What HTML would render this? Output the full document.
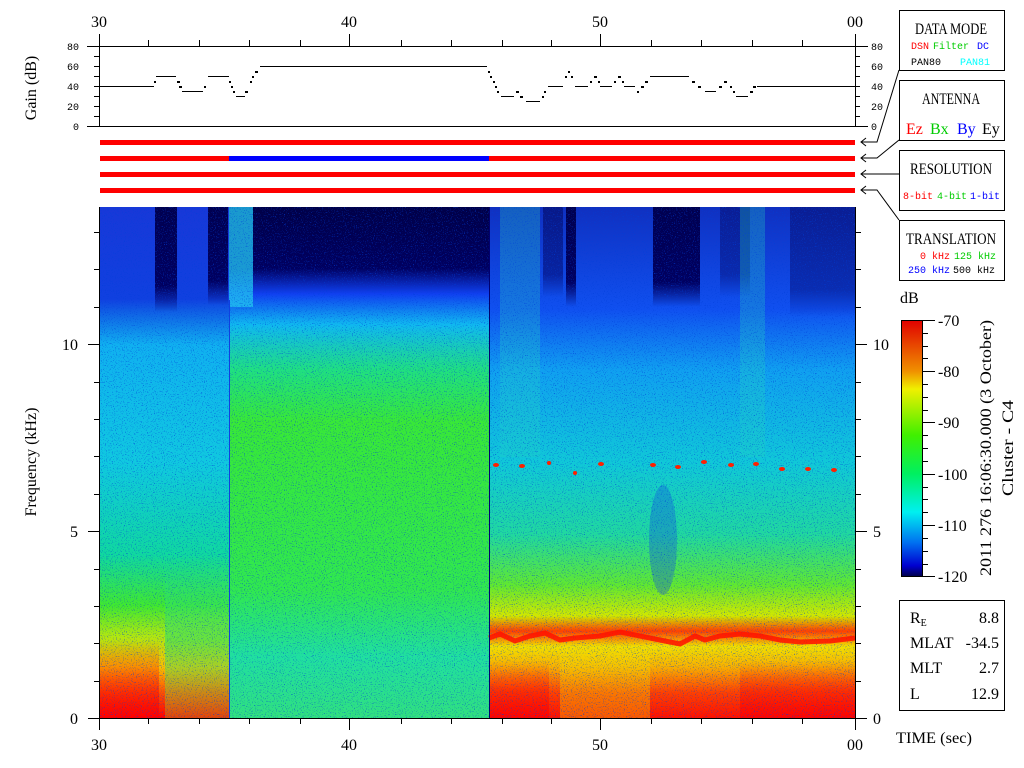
<!DOCTYPE html>
<html><head><meta charset="utf-8"><style>
html,body{margin:0;padding:0;background:#fff;width:1024px;height:768px;overflow:hidden}
svg{display:block}
.s{font-family:"Liberation Serif",serif;font-size:16px;fill:#000}
.m{font-family:"Liberation Mono",monospace;font-size:10px}
</style></head><body>
<svg width="1024" height="768" viewBox="0 0 1024 768" xmlns="http://www.w3.org/2000/svg">
<defs>
<linearGradient id="gL" gradientUnits="userSpaceOnUse" x1="0" y1="207" x2="0" y2="718">
<stop offset="0" stop-color="#1838d8"/><stop offset="0.18" stop-color="#1040e0"/><stop offset="0.27" stop-color="#10b0f0"/><stop offset="0.5" stop-color="#10c8e0"/><stop offset="0.68" stop-color="#10d8a0"/><stop offset="0.78" stop-color="#40e830"/><stop offset="0.84" stop-color="#b0e810"/><stop offset="0.9" stop-color="#f8c000"/><stop offset="0.95" stop-color="#ff5000"/><stop offset="1" stop-color="#ff0000"/></linearGradient>
<linearGradient id="gM" gradientUnits="userSpaceOnUse" x1="0" y1="207" x2="0" y2="718">
<stop offset="0" stop-color="#000048"/><stop offset="0.12" stop-color="#000060"/><stop offset="0.17" stop-color="#1040f0"/><stop offset="0.23" stop-color="#10b8f0"/><stop offset="0.32" stop-color="#20e080"/><stop offset="0.42" stop-color="#38e838"/><stop offset="0.75" stop-color="#30e850"/><stop offset="0.88" stop-color="#20e0a0"/><stop offset="1" stop-color="#30e080"/></linearGradient>
<linearGradient id="gR" gradientUnits="userSpaceOnUse" x1="0" y1="207" x2="0" y2="718">
<stop offset="0" stop-color="#1030c0"/><stop offset="0.2" stop-color="#1050f0"/><stop offset="0.32" stop-color="#10a0f0"/><stop offset="0.5" stop-color="#10c8d8"/><stop offset="0.64" stop-color="#20d8a0"/><stop offset="0.74" stop-color="#60e830"/><stop offset="0.8" stop-color="#d0e800"/><stop offset="0.83" stop-color="#ff4000"/><stop offset="0.86" stop-color="#f0e000"/><stop offset="0.9" stop-color="#f8b000"/><stop offset="0.95" stop-color="#ff4000"/><stop offset="1" stop-color="#ff1000"/></linearGradient>
<linearGradient id="nv" x1="0" y1="0" x2="0" y2="1"><stop offset="0" stop-color="#000050"/><stop offset="0.75" stop-color="#000060"/><stop offset="1" stop-color="#000060" stop-opacity="0"/></linearGradient>
<linearGradient id="cb" x1="0" y1="0" x2="0" y2="1">
<stop offset="0" stop-color="#e00000"/><stop offset="0.2" stop-color="#f09000"/><stop offset="0.27" stop-color="#f0f000"/><stop offset="0.45" stop-color="#40f000"/><stop offset="0.6" stop-color="#00f060"/><stop offset="0.75" stop-color="#00f0f0"/><stop offset="0.87" stop-color="#0070f0"/><stop offset="0.96" stop-color="#0000d0"/><stop offset="1" stop-color="#000050"/></linearGradient>
<linearGradient id="rd" x1="0" y1="0" x2="0" y2="1"><stop offset="0" stop-color="#ff1000" stop-opacity="0"/><stop offset="0.6" stop-color="#ff1000" stop-opacity="0.5"/><stop offset="1" stop-color="#ff0000" stop-opacity="0.8"/></linearGradient>
<linearGradient id="gn" x1="0" y1="0" x2="0" y2="1"><stop offset="0" stop-color="#20d8b0" stop-opacity="0"/><stop offset="0.5" stop-color="#30e060" stop-opacity="0.6"/><stop offset="1" stop-color="#a0e020" stop-opacity="0.3"/></linearGradient>
<filter id="nz" x="0" y="0" width="100%" height="100%"><feTurbulence type="fractalNoise" baseFrequency="0.9" numOctaves="1" seed="3"/><feColorMatrix type="matrix" values="0 0 0 0 0  0 0 0 0 0.05  0 0 0 0 0.7  0 0 0 9 -5.4"/></filter>
</defs>

<g class="s" font-size="17" text-anchor="middle">
<text x="99" y="27">30</text><text x="349" y="27">40</text><text x="600" y="27">50</text><text x="855" y="27">00</text>
</g>
<g stroke="#000" fill="none" stroke-width="1">
<path d="M99.5 34V126.5M87 46.5H99M87 126.5H99M94 56.5H99M94 66.5H99M94 76.5H99M94 86.5H99M94 96.5H99M94 106.5H99M94 116.5H99"/>
<path d="M855.5 34V126.5M855 46.5H868M855 126.5H868M855 56.5H860M855 66.5H860M855 76.5H860M855 86.5H860M855 96.5H860M855 106.5H860M855 116.5H860"/>
<path d="M99 126.5H856M99 46.5H856"/>
<path d="M148.5 40V46M199.5 40V46M249.5 40V46M300.5 40V46M349.5 34V46M401.5 40V46M451.5 40V46M502.5 40V46M551.5 40V46M600.5 34V46M651.5 40V46M701.5 40V46M752.5 40V46M802.5 40V46"/>
<path d="M100 86.5H154M156 76.5H176M182 91.5H203M208 76.5H229M236 96.5H245M260 66.5H487M501 96.5H514M526 101.5H540M548 86.5H563M575 86.5H588M600 86.5H612M624 86.5H635M650 76.5H689M705 91.5H716M736 96.5H748M757 86.5H855"/>
</g>
<g fill="#000">
<rect x="154" y="81" width="2" height="2"/><rect x="177" y="81" width="3" height="2"/><rect x="179" y="86" width="3" height="2"/><rect x="204" y="86" width="2" height="2"/><rect x="229" y="81" width="2" height="2"/><rect x="231" y="86" width="2" height="2"/><rect x="233" y="91" width="2" height="2"/><rect x="245" y="91" width="3" height="2"/><rect x="250" y="81" width="2" height="2"/><rect x="252" y="76" width="2" height="2"/><rect x="255" y="71" width="3" height="2"/>
<rect x="488" y="71" width="2" height="2"/><rect x="490" y="76" width="2" height="2"/><rect x="493" y="81" width="2" height="2"/><rect x="495" y="86" width="2" height="2"/><rect x="497" y="91" width="2" height="2"/><rect x="516" y="91" width="3" height="2"/><rect x="520" y="96" width="3" height="2"/><rect x="542" y="96" width="2" height="2"/><rect x="544" y="91" width="2" height="2"/><rect x="565" y="76" width="2" height="2"/><rect x="568" y="71" width="2" height="2"/><rect x="571" y="76" width="2" height="2"/><rect x="590" y="81" width="2" height="2"/><rect x="594" y="76" width="3" height="2"/><rect x="598" y="81" width="2" height="2"/><rect x="614" y="81" width="2" height="2"/><rect x="618" y="76" width="3" height="2"/><rect x="622" y="81" width="2" height="2"/><rect x="637" y="91" width="2" height="2"/><rect x="641" y="86" width="3" height="2"/><rect x="645" y="81" width="3" height="2"/><rect x="692" y="81" width="3" height="2"/><rect x="698" y="86" width="3" height="2"/><rect x="719" y="86" width="3" height="2"/><rect x="724" y="81" width="3" height="2"/><rect x="730" y="86" width="2" height="2"/><rect x="733" y="91" width="2" height="2"/><rect x="750" y="91" width="3" height="2"/><rect x="753" y="86" width="3" height="2"/>
</g>
<g class="m" fill="#000" font-size="11">
<text x="67" y="50">80</text><text x="67" y="70">60</text><text x="67" y="90">40</text><text x="67" y="110">20</text><text x="73" y="130">0</text>
<text x="871" y="50">80</text><text x="871" y="70">60</text><text x="871" y="90">40</text><text x="871" y="110">20</text><text x="871" y="130">0</text>
</g>
<text class="s" transform="translate(36,88) rotate(-90)" text-anchor="middle" font-size="16">Gain (dB)</text>

<rect x="100" y="140" width="755" height="5" fill="#f00"/>
<rect x="100" y="156" width="755" height="5" fill="#f00"/>
<rect x="229" y="156" width="260" height="5" fill="#00f"/>
<rect x="100" y="172" width="755" height="5" fill="#f00"/>
<rect x="100" y="188" width="755" height="5" fill="#f00"/>

<g stroke="#000" fill="none">
<path d="M866 138L861 142L866 146M861 142H877L899 70"/>
<path d="M866 154L861 158L866 162M861 158H877L899 140"/>
<path d="M866 170L861 174L866 178M861 174H899"/>
<path d="M866 186L861 190L866 194M861 190H877L899 220"/>
</g>
<g fill="#fff" stroke="#000">
<rect x="899.5" y="10.5" width="105" height="60"/>
<rect x="899.5" y="80.5" width="105" height="60"/>
<rect x="899.5" y="150.5" width="105" height="60"/>
<rect x="899.5" y="220.5" width="105" height="60"/>
<rect x="899.5" y="600.5" width="105" height="110"/>
</g>
<g class="s" font-size="15">
<text x="915" y="34" textLength="72" lengthAdjust="spacingAndGlyphs">DATA MODE</text>
<text x="922" y="104" textLength="58" lengthAdjust="spacingAndGlyphs">ANTENNA</text>
<text x="910" y="174" textLength="82" lengthAdjust="spacingAndGlyphs">RESOLUTION</text>
<text x="906" y="244" textLength="90" lengthAdjust="spacingAndGlyphs">TRANSLATION</text>
</g>
<g class="m">
<text x="911" y="49" fill="#f00">DSN</text><text x="933" y="49" fill="#0c0">Filter</text><text x="977" y="49" fill="#00f">DC</text>
<text x="911" y="65" fill="#000">PAN80</text><text x="960" y="65" fill="#0ff">PAN81</text>
<text x="903" y="199" fill="#f00">8-bit</text><text x="937" y="199" fill="#0c0">4-bit</text><text x="970" y="199" fill="#00f">1-bit</text>
<text x="920" y="259" fill="#f00">0 kHz</text><text x="954" y="259" fill="#0c0">125 kHz</text>
<text x="908" y="273" fill="#00f">250 kHz</text><text x="953" y="273" fill="#000">500 kHz</text>
</g>
<g class="s" font-size="16">
<text x="906" y="134" fill="#f00">Ez</text><text x="930" y="134" fill="#0c0">Bx</text><text x="957" y="134" fill="#00f">By</text><text x="982" y="134" fill="#000">Ey</text>
</g>

<!-- spectrogram -->
<rect x="99" y="207" width="130" height="511" fill="url(#gL)"/>
<rect x="229" y="207" width="260" height="511" fill="url(#gM)"/>
<rect x="489" y="207" width="366" height="511" fill="url(#gR)"/>
<rect x="165" y="560" width="64" height="158" fill="url(#gn)"/>
<rect x="229" y="207" width="24" height="100" fill="#20c0f0" opacity="0.8"/>
<rect x="155" y="207" width="22" height="105" fill="url(#nv)"/>
<rect x="208" y="207" width="20" height="98" fill="url(#nv)"/>
<rect x="653" y="207" width="47" height="100" fill="url(#nv)"/>
<rect x="566" y="207" width="10" height="100" fill="url(#nv)"/>
<rect x="543" y="207" width="20" height="90" fill="url(#nv)" opacity="0.5"/>
<rect x="720" y="207" width="30" height="90" fill="url(#nv)" opacity="0.4"/>
<rect x="790" y="207" width="65" height="110" fill="url(#nv)" opacity="0.4"/>
<rect x="500" y="207" width="40" height="250" fill="#20d0c0" opacity="0.3"/>
<rect x="740" y="207" width="25" height="250" fill="#20d0c0" opacity="0.3"/>
<ellipse cx="663" cy="540" rx="14" ry="55" fill="#1050e0" opacity="0.35"/>
<rect x="560" y="650" width="90" height="68" fill="#f0e000" opacity="0.35"/>
<rect x="99" y="640" width="60" height="78" fill="url(#rd)"/>
<rect x="489" y="660" width="60" height="58" fill="url(#rd)"/>
<rect x="740" y="660" width="115" height="58" fill="url(#rd)"/>
<rect x="99" y="207" width="756" height="511" filter="url(#nz)" opacity="0.6"/>
<path d="M489 638L500 634L515 641L530 636L545 633L560 640L575 638L600 636L620 632L640 636L660 640L680 644L695 636L705 640L720 636L740 634L760 636L780 640L800 642L830 641L855 638" stroke="#ff1000" stroke-width="5" fill="none" opacity="0.85"/>
<g fill="#ff2000">
<ellipse cx="496" cy="465" rx="3" ry="2"/><ellipse cx="522" cy="466" rx="3" ry="2"/><ellipse cx="549" cy="463" rx="2" ry="2"/><ellipse cx="575" cy="473" rx="2" ry="2"/><ellipse cx="601" cy="464" rx="3" ry="2"/><ellipse cx="653" cy="465" rx="3" ry="2"/><ellipse cx="678" cy="467" rx="3" ry="2"/><ellipse cx="704" cy="462" rx="3" ry="2"/><ellipse cx="731" cy="465" rx="3" ry="2"/><ellipse cx="756" cy="464" rx="3" ry="2"/><ellipse cx="782" cy="469" rx="3" ry="2"/><ellipse cx="808" cy="469" rx="3" ry="2"/><ellipse cx="834" cy="470" rx="3" ry="2"/>
</g>
<path d="M489.5 207V718" stroke="#000070" stroke-width="1"/>
<path d="M229.5 300V718" stroke="#1040e0" stroke-width="1"/>

<g stroke="#000" fill="none">
<path d="M99.5 207V718.5H855.5V207"/>
<path d="M88 344.5H99M88 531.5H99M88 718.5H99M94 232.5H99M94 269.5H99M94 307.5H99M94 382.5H99M94 419.5H99M94 456.5H99M94 494.5H99M94 569.5H99M94 606.5H99M94 643.5H99M94 681.5H99"/>
<path d="M855 344.5H867M855 531.5H867M855 718.5H867M855 232.5H861M855 269.5H861M855 307.5H861M855 382.5H861M855 419.5H861M855 456.5H861M855 494.5H861M855 569.5H861M855 606.5H861M855 643.5H861M855 681.5H861"/>
<path d="M99.5 718V730M148.5 718V724M199.5 718V724M249.5 718V724M300.5 718V724M349.5 718V730M401.5 718V724M451.5 718V724M502.5 718V724M551.5 718V724M600.5 718V730M651.5 718V724M701.5 718V724M752.5 718V724M802.5 718V724M855.5 718V730"/>
</g>
<g class="s" font-size="17">
<text x="62" y="350">10</text><text x="70" y="537">5</text><text x="70" y="724">0</text>
<text x="873" y="350">10</text><text x="873" y="537">5</text><text x="873" y="724">0</text>
</g>
<g class="s" font-size="17" text-anchor="middle">
<text x="99" y="750">30</text><text x="349" y="750">40</text><text x="600" y="750">50</text><text x="855" y="750">00</text>
</g>
<text class="s" x="896" y="743" font-size="16" textLength="76" lengthAdjust="spacingAndGlyphs">TIME (sec)</text>
<text class="s" transform="translate(36,462) rotate(-90)" text-anchor="middle" font-size="16">Frequency (kHz)</text>

<text class="s" x="900" y="303" font-size="15">dB</text>
<rect x="901" y="320" width="21" height="256" fill="url(#cb)"/>
<rect x="901.5" y="320.5" width="21" height="256" fill="none" stroke="#000"/>
<g stroke="#000">
<path d="M922 320.5H935M922 371.5H935M922 422.5H935M922 474.5H935M922 525.5H935M922 576.5H935M922 333.5H928M922 346.5H928M922 358.5H928M922 384.5H928M922 397.5H928M922 410.5H928M922 435.5H928M922 448.5H928M922 461.5H928M922 487.5H928M922 499.5H928M922 512.5H928M922 538.5H928M922 551.5H928M922 564.5H928"/>
</g>
<g class="s" font-size="16">
<text x="938" y="326">-70</text><text x="938" y="377">-80</text><text x="938" y="428">-90</text><text x="938" y="480">-100</text><text x="938" y="531">-110</text><text x="938" y="582">-120</text>
</g>
<text class="s" transform="translate(991,448) rotate(-90)" text-anchor="middle" font-size="15" textLength="256" lengthAdjust="spacingAndGlyphs">2011 276 16:06:30.000 (3 October)</text>
<text class="s" transform="translate(1013,448) rotate(-90)" text-anchor="middle" font-size="15" textLength="96" lengthAdjust="spacingAndGlyphs">Cluster - C4</text>

<g class="s" font-size="16">
<text x="910" y="623">R<tspan font-size="10" dy="3">E</tspan></text><text x="999" y="623" text-anchor="end">8.8</text>
<text x="910" y="648">MLAT</text><text x="999" y="648" text-anchor="end">-34.5</text>
<text x="910" y="673">MLT</text><text x="999" y="673" text-anchor="end">2.7</text>
<text x="910" y="699">L</text><text x="999" y="699" text-anchor="end">12.9</text>
</g>
</svg>
</body></html>
